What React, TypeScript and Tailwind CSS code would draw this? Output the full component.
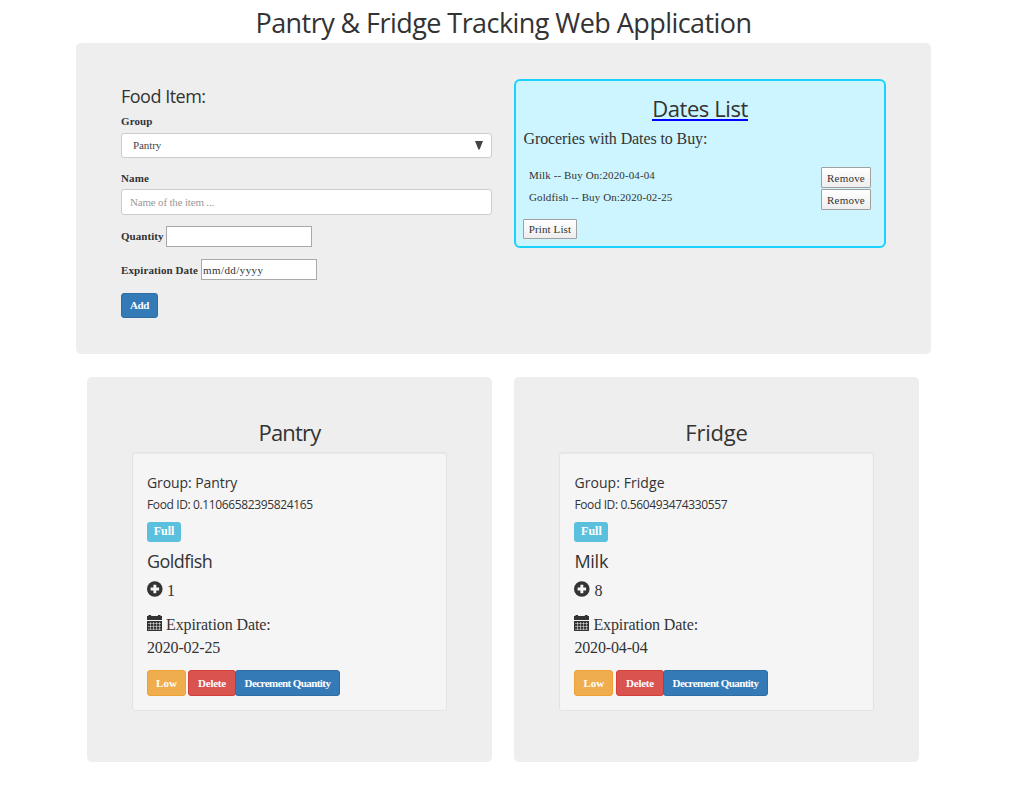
import React, { useState } from 'react';

const segoe = "font-['Open_Sans','Noto_Sans',sans-serif]";

function PlusSign() {
  return (
    <svg className="block shrink-0" width="16" height="16" viewBox="0 0 16 16">
      <circle cx="7.8" cy="8" r="7.8" fill="#333" />
      <path d="M6.4 3.8h2.9v2.8h2.8v2.9H9.3v2.8H6.4V9.5H3.6V6.6h2.8z" fill="#f5f5f5" />
    </svg>
  );
}

function Calendar() {
  return (
    <svg className="block shrink-0" width="15" height="16" viewBox="0 0 15 16">
      <path d="M0 1h1.5V0h2.6v1h6.8V0h2.6v1H15v4H0z" fill="#333" />
      <path d="M0 6h15v10H0z" fill="#333" />
      <path d="M1 8.5h13M1 11.5h13M1 14.3h13M3.5 7v8M6.5 7v8M9.5 7v8M12.5 7v8" stroke="#f5f5f5" strokeWidth=".5" />
    </svg>
  );
}

function ListRow({ text }: { text: string }) {
  return (
    <div className="flex h-[22px] items-start justify-between pl-[6px] pr-[13px]">
      <span className="whitespace-nowrap text-[11px] leading-[17px] tracking-[0.11px]">{text}</span>
      <button className="h-[21px] w-[50px] whitespace-nowrap rounded-[1px] border border-[#a0a0a0] bg-linear-to-b from-white to-[#eee] text-[11px] leading-[20px] tracking-[0.2px]">Remove</button>
    </div>
  );
}

type Food = {
  group: string;
  id: string;
  name: string;
  qty: number;
  date: string;
  titleTracking: string;
  groupTracking: string;
  nameTracking: string;
  pad: string;
  buttonGap: string;
};

function FoodPanel({ group, id, name, qty, date, titleTracking, groupTracking, nameTracking, pad, buttonGap }: Food) {
  return (
    <section className="h-[385px] w-[405px] rounded-[5px] bg-[#eee] px-[45px] pt-[40px]">
      <h2 className={`h-[35px] text-center text-[22px] leading-[30px] ${titleTracking} ${segoe}`}>{group}</h2>
      <div className={`flex h-[259px] w-[315px] flex-col items-start whitespace-nowrap rounded-[3px] border border-[#e3e3e3] bg-[#f5f5f5] pt-[19px] shadow-[inset_0_1px_1px_rgba(0,0,0,0.05)] ${pad}`}>
        <p className={`h-[22px] text-[14px] leading-[22px] ${groupTracking} ${segoe}`}>Group: {group}</p>
        <p className={`mt-[2px] h-[18px] text-[12px] leading-[18px] tracking-[-0.37px] ${segoe}`}>Food ID: {id}</p>
        <span className="mt-[8px] h-[20px] w-[34px] rounded-[3px] bg-[#5bc0de] text-center text-[12px] font-bold leading-[19px] text-white">Full</span>
        <p className={`mt-[6px] h-[27px] text-[18px] leading-[26px] ${nameTracking} ${segoe}`}>{name}</p>
        <div className="mt-[6px] flex h-[16px] items-center gap-[4px] text-[16px] leading-[20px]"><PlusSign /><span className="pt-[3px]">{qty}</span></div>
        <div className="mt-[18px] flex h-[16px] items-center gap-[4px] text-[16px] leading-[20px] tracking-[-0.1px]"><Calendar /><span className="pt-[4px]">Expiration Date:</span></div>
        <p className="mt-[7px] h-[20px] text-[16px] leading-[20px] tracking-[-0.15px]">{date}</p>
        <div className="mt-[12px] flex h-[26px] text-[11px] font-bold leading-[24px] text-white">
          <button className={`w-[39px] rounded-[3px] border border-[#eea236] bg-[#f0ad4e] ${buttonGap}`}>Low</button>
          <button className="w-[48px] rounded-[3px] border border-[#d43f3a] bg-[#d9534f] tracking-[-0.25px]">Delete</button>
          <button className="-ml-px w-[105px] rounded-[3px] border border-[#2e6da4] bg-[#337ab7] tracking-[-0.57px]">Decrement Quantity</button>
        </div>
      </div>
    </section>
  );
}

export default function App() {
  const [name, setName] = useState('');
  const [qty, setQty] = useState('');
  return (
    <div className="min-h-[808px] w-[1021px] bg-white pl-[76px] font-['Liberation_Serif',serif] text-[#333]">
      <h1 className={`h-[43px] w-[855px] whitespace-nowrap pt-[5px] text-center text-[27px] leading-[36px] tracking-[-0.56px] ${segoe}`}>Pantry &amp; Fridge Tracking Web Application</h1>
      <main className="flex h-[311px] w-[855px] gap-[22px] rounded-[5px] bg-[#eee] pl-[45px] pt-[36px]">
        <form className="flex w-[371px] flex-col items-start text-[11px]" onSubmit={(e) => e.preventDefault()}>
          <h3 className={`mt-[4px] h-[27px] text-[18px] leading-[26px] tracking-[-0.5px] ${segoe}`}>Food Item:</h3>
          <label className="mt-[3px] h-[20px] font-bold leading-[17px] tracking-[0.1px]">Group</label>
          <button type="button" className="flex h-[25px] w-full items-center justify-between rounded-[3px] border border-[#ccc] bg-white pl-[11px] pr-[8px] text-[#444]">
            <span className="tracking-[-0.1px]">Pantry</span>
            <svg width="8" height="9" viewBox="0 0 8 9"><path d="M0 0h8L4.6 8.5H3.4z" fill="#444" /></svg>
          </button>
          <label className="mt-[12px] h-[19px] font-bold leading-[17px] tracking-[0.1px]">Name</label>
          <input value={name} onChange={(e) => setName(e.target.value)} placeholder="Name of the item ..." className="h-[26px] w-full rounded-[3px] border border-[#ccc] bg-white px-[8px] tracking-[-0.18px] placeholder:text-[#999]" />
          <div className="mt-[11px] flex h-[21px] items-center">
            <label className="w-[45px] whitespace-nowrap font-bold tracking-[0.05px]">Quantity</label>
            <input value={qty} onChange={(e) => setQty(e.target.value)} className="h-[21px] w-[146px] border border-[#a9a9a9] bg-white px-[2px]" />
          </div>
          <div className="mt-[12px] flex h-[21px] items-center">
            <label className="w-[80px] whitespace-nowrap pt-[2px] font-bold tracking-[0.1px]">Expiration Date</label>
            <div className="h-[21px] w-[116px] border border-[#a9a9a9] bg-white pl-[1px] leading-[21px] tracking-[0.42px]">mm/dd/yyyy</div>
          </div>
          <button className="mt-[13px] h-[25px] w-[37px] rounded-[3px] border border-[#2e6da4] bg-[#337ab7] font-bold leading-[23px] tracking-[-0.4px] text-white">Add</button>
        </form>
        <aside className="h-[169px] w-[372px] rounded-[6px] border-2 border-[#1ad1ff] bg-[#ccf5ff] pl-[7px] pt-[12px]">
          <div className="flex h-[35px] w-[354px] justify-center">
            <h2 className={`h-[28px] border-b-2 border-[#0000ff] text-[22px] leading-[30px] tracking-[-0.42px] ${segoe}`}>Dates List</h2>
          </div>
          <p className="h-[39px] pl-[0.5px] text-[16px] leading-[22px] tracking-[-0.1px]">Groceries with Dates to Buy:</p>
          <ListRow text="Milk -- Buy On:2020-04-04" />
          <ListRow text="Goldfish -- Buy On:2020-02-25" />
          <button className="mt-[8px] h-[20px] w-[54px] whitespace-nowrap rounded-[1px] border border-[#a0a0a0] bg-linear-to-b from-white to-[#eee] text-[11px] leading-[19px] tracking-[0.1px]">Print List</button>
        </aside>
      </main>
      <div className="mt-[23px] flex gap-[22px] pl-[11px]">
        <FoodPanel group="Pantry" id="0.11066582395824165" name="Goldfish" qty={1} date="2020-02-25" titleTracking="tracking-[-0.8px]" groupTracking="tracking-[-0.08px]" nameTracking="tracking-[-0.55px]" pad="pl-[14px]" buttonGap="mr-[2px]" />
        <FoodPanel group="Fridge" id="0.560493474330557" name="Milk" qty={8} date="2020-04-04" titleTracking="tracking-[-0.2px]" groupTracking="tracking-[0.07px]" nameTracking="tracking-[-0.25px]" pad="pl-[14.4px]" buttonGap="mr-[2.6px]" />
      </div>
    </div>
  );
}
